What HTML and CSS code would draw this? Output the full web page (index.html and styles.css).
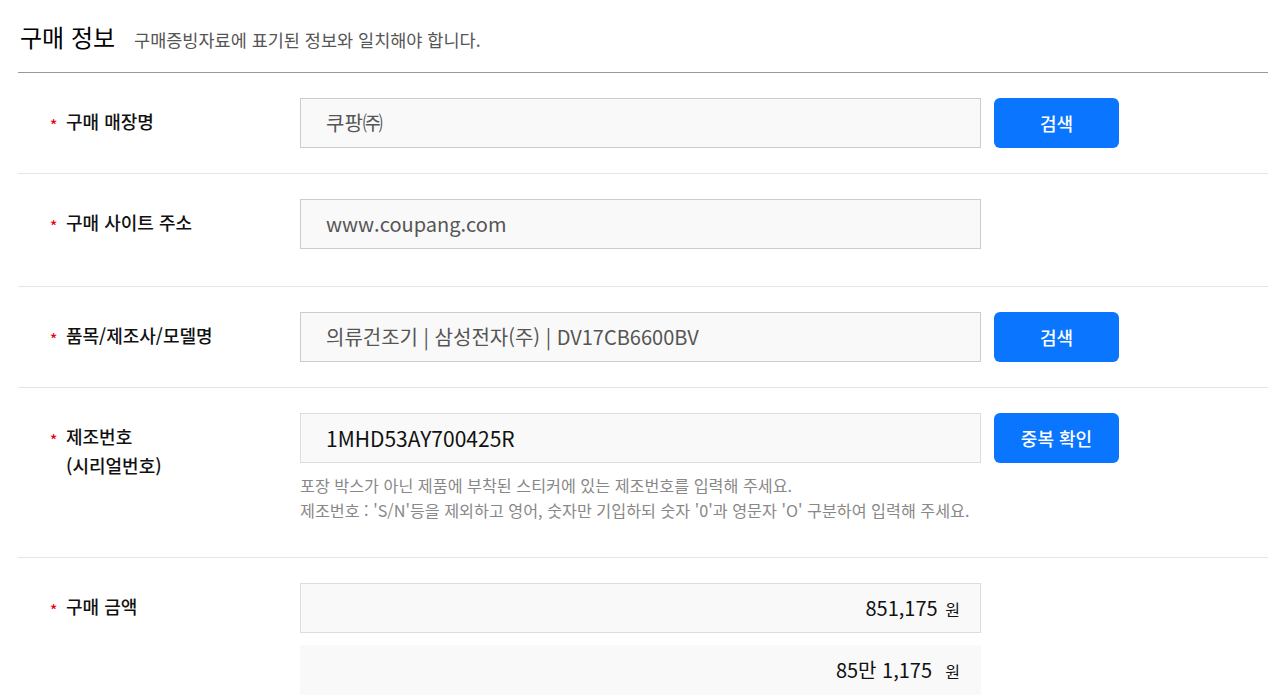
FILE: index.html
```html
<!DOCTYPE html>
<html lang="ko">
<head>
    <meta charset="UTF-8">
    <meta name="viewport" content="width=device-width, initial-scale=1.0">
    <title>구매 정보</title>
    <link rel="stylesheet" href="styles.css">
</head>
<body>
    <div class="container">
        <div class="section-head">
            <h2>구매 정보</h2>
            <p class="desc">구매증빙자료에 표기된 정보와 일치해야 합니다.</p>
        </div>

        <div class="form-row">
            <div class="label"><span class="req">*</span>구매 매장명</div>
            <div class="field">
                <div class="field-line">
                    <div class="input gray">쿠팡㈜</div>
                    <button class="btn">검색</button>
                </div>
            </div>
        </div>

        <div class="form-row tall">
            <div class="label"><span class="req">*</span>구매 사이트 주소</div>
            <div class="field">
                <div class="field-line">
                    <div class="input gray">www.coupang.com</div>
                </div>
            </div>
        </div>

        <div class="form-row">
            <div class="label"><span class="req">*</span>품목/제조사/모델명</div>
            <div class="field">
                <div class="field-line">
                    <div class="input gray">의류건조기 | 삼성전자(주) | DV17CB6600BV</div>
                    <button class="btn">검색</button>
                </div>
            </div>
        </div>

        <div class="form-row help-row">
            <div class="label"><span class="req">*</span>제조번호<br>(시리얼번호)</div>
            <div class="field">
                <div class="field-line">
                    <div class="input serial">1MHD53AY700425R</div>
                    <button class="btn">중복 확인</button>
                </div>
                <p class="help">포장 박스가 아닌 제품에 부착된 스티커에 있는 제조번호를 입력해 주세요.<br>제조번호 : 'S/N'등을 제외하고 영어, 숫자만 기입하되 숫자 '0'과 영문자 'O' 구분하여 입력해 주세요.</p>
            </div>
        </div>

        <div class="form-row last">
            <div class="label"><span class="req">*</span>구매 금액</div>
            <div class="field">
                <div class="field-line">
                    <div class="input amount">851,175 <span class="won">원</span></div>
                </div>
                <div class="field-line">
                    <div class="input amount plain">85만 1,175 &nbsp;<span class="won">원</span></div>
                </div>
            </div>
        </div>
    </div>
</body>
</html>
```

FILE: styles.css
```css
/* 구매 정보 폼 */
body {
    font-family: "Noto Sans CJK KR", "Noto Sans", sans-serif;
    background-color: #ffffff;
    color: #222;
    margin: 0;
    padding: 0;
}

.container {
    margin: 0 18px;
}

.section-head {
    display: flex;
    align-items: baseline;
    padding: 19px 2px 0;
    height: 73px;
    box-sizing: border-box;
    border-bottom: 1px solid #999;
}

.section-head h2 {
    margin: 0;
    font-size: 24px;
    font-weight: 400;
    color: #000;
}

.section-head .desc {
    margin: 0 0 0 19px;
    font-size: 17.5px;
    color: #555;
}

.form-row {
    display: flex;
    padding: 25px 0;
    border-bottom: 1px solid #e5e5e5;
}

.form-row.tall {
    padding-bottom: 37px;
}

.form-row.help-row {
    padding-bottom: 34px;
}

.form-row.last {
    border-bottom: none;
    padding-bottom: 0;
}

.label {
    width: 250px;
    padding: 9px 0 0 48px;
    box-sizing: border-box;
    font-size: 18px;
    font-weight: 500;
    line-height: 29px;
    color: #111;
    position: relative;
}

.req {
    position: absolute;
    left: 32px;
    top: 12px;
    color: #e60012;
    font-size: 15px;
}

.field {
    flex: 1;
    padding-left: 32px;
}

.field-line {
    display: flex;
    gap: 13px;
}

.field-line + .field-line {
    margin-top: 12px;
}

.input {
    width: 681px;
    height: 50px;
    box-sizing: border-box;
    border: 1px solid #ccc;
    background-color: #f9f9f9;
    padding: 0 25px;
    font-size: 20px;
    line-height: 48px;
    color: #111;
}

.input.gray {
    color: #555;
}

.input.serial {
    font-size: 21px;
    border-color: #ddd;
}

.input.amount {
    text-align: right;
    padding-right: 20px;
    border-color: #ddd;
}

.input.plain {
    border-color: #f9f9f9;
}

.won {
    font-size: 16px;
    margin-left: 2px;
}

.btn {
    width: 125px;
    height: 50px;
    border: none;
    border-radius: 6px;
    background-color: #0a75ff;
    color: #fff;
    font-family: inherit;
    font-size: 18px;
    font-weight: 500;
    cursor: pointer;
}

.help {
    margin: 10px 0 0;
    font-size: 16.2px;
    line-height: 25px;
    color: #888;
}
```
